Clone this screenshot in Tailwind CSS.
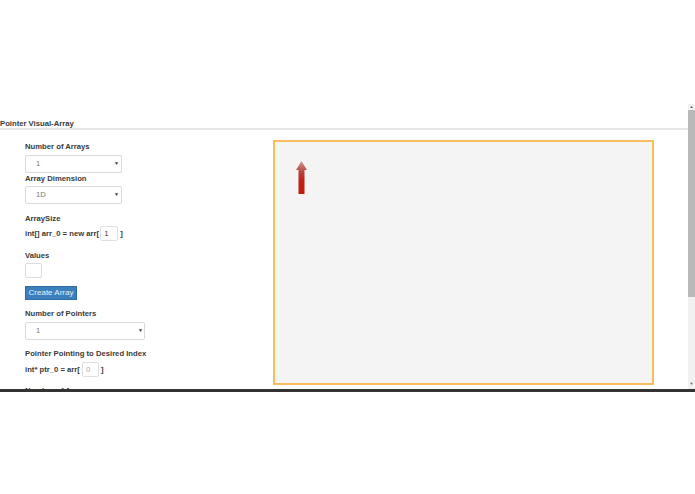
<!DOCTYPE html>
<html>
<head>
<meta charset="utf-8">
<script src="https://cdn.jsdelivr.net/npm/@tailwindcss/browser@4"></script>
</head>
<body class="bg-white font-['Liberation_Sans',sans-serif] text-[#3a3a3a]">
<div class="h-[494px] w-[695px] overflow-hidden flex flex-col">
  <div class="h-[104px] shrink-0"></div>
  <div class="h-[285px] shrink-0 flex overflow-hidden">
    <div class="w-[688px] shrink-0 overflow-hidden">
      <div class="h-[26px] border-b-2 border-[#e6e6e6] pt-[14px] text-[7.7px] font-bold leading-[12px]">Pointer Visual-Array</div>
      <div class="flex">
        <div class="w-[273px] shrink-0 pl-[25px] pt-[11px] text-[7.7px] font-bold">
          <div class="leading-[12px] h-[14px]">Number of Arrays</div>
          <div class="h-[18px] w-[97px] bg-white border border-[#d9d9d9] rounded-[2px] flex items-center justify-between pl-[10px] pr-[2px] font-normal text-[#777]"><span>1</span><span class="text-[5px] text-[#333]">▼</span></div>
          <div class="leading-[12px] h-[13px]">Array Dimension</div>
          <div class="h-[18px] w-[97px] bg-white border border-[#d9d9d9] rounded-[2px] flex items-center justify-between pl-[10px] pr-[2px] font-normal text-[#777]"><span>1D</span><span class="text-[5px] text-[#333]">▼</span></div>
          <div class="leading-[12px] h-[10px] mt-[9px]">ArraySize</div>
          <div class="flex items-center h-[16px] mt-[2px] gap-[1px]"><span class="pt-[1px]">int[] arr_0 = new arr[</span><span class="h-[15px] w-[18px] border border-[#e0e0e0] rounded-[2px] pl-[3px] font-normal leading-[13px]">1</span><span class="ml-[1px] pt-[1px]">]</span></div>
          <div class="leading-[12px] h-[10px] mt-[9px]">Values</div>
          <div class="h-[15px] w-[17px] border border-[#dcdcdc] rounded-[2px] mt-[3px]"></div>
          <button class="block h-[14px] w-[52px] bg-[#3b80bd] border border-[#2e6da4] text-[#e8f0f8] font-normal text-[8px] leading-[12px] mt-[8px]">Create Array</button>
          <div class="leading-[12px] h-[10px] mt-[8px]">Number of Pointers</div>
          <div class="h-[18px] w-[120px] bg-white border border-[#d9d9d9] rounded-[2px] flex items-center justify-between pl-[10px] pr-[1px] mt-[4px] font-normal text-[#777]"><span>1</span><span class="text-[5px] text-[#333]">▼</span></div>
          <div class="leading-[12px] h-[10px] mt-[8px]">Pointer Pointing to Desired Index</div>
          <div class="flex items-center h-[15px] mt-[4px] gap-[2px]"><span>int* ptr_0 = arr[</span><span class="h-[15px] w-[17px] border border-[#e0e0e0] rounded-[2px] pl-[3px] font-normal leading-[13px] text-[#aaa]">0</span><span>]</span></div>
          <div class="leading-[10px] h-[10px] mt-[9px]">Number of Arrows</div>
        </div>
        <div class="w-[381px] h-[245px] mt-[10px] shrink-0 bg-[#f4f4f4] border-2 border-[#f6bf5c] pt-[19px] pl-[21px]">
          <svg width="11" height="33" viewBox="0 0 11 33" class="block">
            <defs><linearGradient id="g" x1="0" y1="0" x2="0" y2="1"><stop offset="0" stop-color="#cf9492"/><stop offset="0.35" stop-color="#b5443c"/><stop offset="0.6" stop-color="#c01f15"/><stop offset="1" stop-color="#c41a10"/></linearGradient></defs>
            <path d="M5.5 0 L11 9 L8.5 9 L8.5 33 L2.5 33 L2.5 9 L0 9 Z" fill="url(#g)"/>
          </svg>
        </div>
      </div>
    </div>
    <div class="w-[7px] shrink-0 bg-[#f1f1f1] flex flex-col">
      <div class="h-[6px] flex items-center justify-center text-[4px] leading-none text-[#555]">▲</div>
      <div class="h-[187px] bg-[#b9b9b9]"></div>
      <div class="flex-1"></div>
      <div class="h-[6px] mb-[2px] flex items-center justify-center text-[4px] leading-none text-[#555]">▼</div>
    </div>
  </div>
  <div class="h-[3px] shrink-0 bg-[#333]"></div>
</div>
</body>
</html>
